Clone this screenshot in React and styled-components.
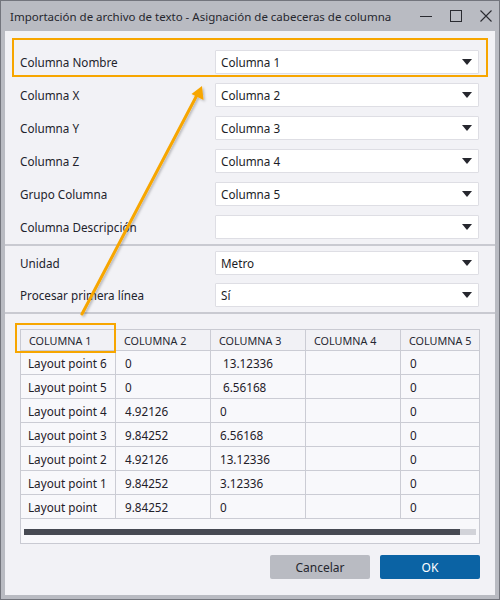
import React from "react";
import styled, { createGlobalStyle } from "styled-components";

const GlobalStyle = createGlobalStyle`
  html, body { margin: 0; padding: 0; background: #ffffff; }
  body { font-family: "Noto Sans", "Open Sans", sans-serif; }
  * { box-sizing: border-box; }
`;

const ORANGE = "#f7a600";

const Window = styled.div`
  position: relative;
  width: 500px;
  height: 600px;
  border: 1px solid #73757d;
  background: #b9bbc2;
  display: flex;
  flex-direction: column;
`;

const TitleBar = styled.div`
  height: 30px;
  display: flex;
  align-items: center;
  padding-left: 9px;
  flex-shrink: 0;
`;

const Title = styled.div`
  flex: 1;
  font-size: 11.5px;
  color: #26272e;
  white-space: nowrap;
`;

const WinButtons = styled.div`
  display: flex;
  align-items: center;
  gap: 18px;
  padding-right: 7px;
`;

const Body = styled.div`
  flex: 1;
  margin: 0 4px 4px 4px;
  background: #f2f2f6;
  display: flex;
  flex-direction: column;
`;

const Section = styled.div`
  display: flex;
  flex-direction: column;
  gap: ${(p) => p.$gap}px;
  padding: ${(p) => p.$pad};
`;

const Separator = styled.div`
  height: 2px;
  background: #c9cad1;
`;

const Row = styled.div`
  position: relative;
  display: grid;
  grid-template-columns: 195px 264px;
  align-items: center;
  height: 24px;
`;

const Label = styled.div`
  font-size: 11.7px;
  color: #22232c;
`;

const Dropdown = styled.div`
  height: 24px;
  background: #ffffff;
  border: 1px solid #dedee4;
  border-radius: 1px;
  display: flex;
  align-items: center;
  justify-content: space-between;
  padding: 0 6px 0 5px;
  font-size: 11.7px;
  color: #1c1d26;
`;

const Caret = styled.span`
  width: 0;
  height: 0;
  border-left: 5px solid transparent;
  border-right: 5px solid transparent;
  border-top: 6px solid #26272e;
`;

const Highlight = styled.div`
  position: absolute;
  border: 2px solid ${ORANGE};
  pointer-events: none;
  left: ${(p) => p.$l}px;
  top: ${(p) => p.$t}px;
  width: ${(p) => p.$w}px;
  height: ${(p) => p.$h}px;
`;

const TableBox = styled.div`
  position: relative;
  width: 460px;
  border: 1px solid #c9cad2;
  background: #f8f8fb;
`;

const GridClip = styled.div`
  overflow: hidden;
`;

const Grid = styled.div`
  display: grid;
  grid-template-columns: repeat(5, 95px);
  width: 475px;
`;

const HeadCell = styled.div`
  height: 21px;
  background: #f1f1f5;
  border-right: 1px solid #cbccd4;
  border-bottom: 1px solid #cbccd4;
  padding: 0 7px 0 8px;
  display: flex;
  align-items: center;
  font-size: 10.8px;
  color: #262731;
  white-space: nowrap;
`;

const Cell = styled.div`
  height: 24px;
  background: #f8f8fb;
  border-right: 1px solid #cbccd4;
  border-bottom: 1px solid #cbccd4;
  padding: 0 7px 0 ${(p) => (p.$first ? 7 : 9)}px;
  display: flex;
  align-items: center;
  font-size: 11.7px;
  color: #1f2029;
  white-space: pre;
`;

const ScrollArea = styled.div`
  height: 24px;
  padding: 10px 3px 0 3px;
`;

const Track = styled.div`
  height: 6px;
  background: #d2d3d9;
  display: flex;
`;

const Thumb = styled.div`
  height: 6px;
  background: #474a53;
`;

const ButtonBar = styled.div`
  display: flex;
  justify-content: flex-end;
  gap: 10px;
  width: 460px;
`;

const Button = styled.button`
  width: 100px;
  height: 24px;
  border: none;
  border-radius: 2px;
  font-family: "Noto Sans", "Open Sans", sans-serif;
  font-size: 12px;
  background: ${(p) => (p.$primary ? "#0b63a4" : "#b9bbc2")};
  color: ${(p) => (p.$primary ? "#ffffff" : "#25262e")};
  padding: 0;
`;

const Overlay = styled.svg`
  position: absolute;
  left: -1px;
  top: -1px;
  pointer-events: none;
`;

const rows = [
  ["Columna Nombre", "Columna 1"],
  ["Columna X", "Columna 2"],
  ["Columna Y", "Columna 3"],
  ["Columna Z", "Columna 4"],
  ["Grupo Columna", "Columna 5"],
  ["Columna Descripción", ""],
];

const data = [
  ["Layout point 6", "0", " 13.12336", "", "0"],
  ["Layout point 5", "0", " 6.56168", "", "0"],
  ["Layout point 4", "4.92126", "0", "", "0"],
  ["Layout point 3", "9.84252", "6.56168", "", "0"],
  ["Layout point 2", "4.92126", "13.12336", "", "0"],
  ["Layout point 1", "9.84252", "3.12336", "", "0"],
  ["Layout point", "9.84252", "0", "", "0"],
];

function Field({ label, value, highlight }) {
  return (
    <Row>
      <Label>{label}</Label>
      <Dropdown>
        <span>{value}</span>
        <Caret />
      </Dropdown>
      {highlight && <Highlight $l={-8} $t={-12} $w={476} $h={39} />}
    </Row>
  );
}

export default function App() {
  return (
    <>
      <GlobalStyle />
      <Window>
        <TitleBar>
          <Title>Importación de archivo de texto - Asignación de cabeceras de columna</Title>
          <WinButtons>
            <svg width="12" height="12" viewBox="0 0 12 12">
              <line x1="0" y1="6.5" x2="12" y2="6.5" stroke="#2a2b31" strokeWidth="1" />
            </svg>
            <svg width="12" height="12" viewBox="0 0 12 12">
              <rect x="0.5" y="0.5" width="11" height="11" fill="none" stroke="#2a2b31" strokeWidth="1" />
            </svg>
            <svg width="12" height="12" viewBox="0 0 12 12">
              <path d="M0.5 0.5 L11.5 11.5 M11.5 0.5 L0.5 11.5" stroke="#2a2b31" strokeWidth="1.1" />
            </svg>
          </WinButtons>
        </TitleBar>
        <Body>
          <Section $gap={9} $pad="19px 16px 5px 15px">
            {rows.map(([l, v], i) => (
              <Field key={l} label={l} value={v} highlight={i === 0} />
            ))}
          </Section>
          <Separator />
          <Section $gap={8} $pad="5px 16px 5px 15px">
            <Field label="Unidad" value="Metro" />
            <Field label="Procesar primera línea" value="Sí" />
          </Section>
          <Separator />
          <Section $gap={11} $pad="15px 15px 16px 15px">
            <TableBox>
              <GridClip>
                <Grid>
                  {["COLUMNA 1", "COLUMNA 2", "COLUMNA 3", "COLUMNA 4", "COLUMNA 5"].map((h) => (
                    <HeadCell key={h}>{h}</HeadCell>
                  ))}
                  {data.map((r, i) =>
                    r.map((c, j) => (
                      <Cell key={i + "-" + j} $first={j === 0}>
                        {c}
                      </Cell>
                    ))
                  )}
                </Grid>
              </GridClip>
              <ScrollArea>
                <Track>
                  <Thumb style={{ width: "436px" }} />
                </Track>
              </ScrollArea>
              <Highlight $l={-6} $t={-7} $w={101} $h={30} />
            </TableBox>
            <ButtonBar>
              <Button>Cancelar</Button>
              <Button $primary>OK</Button>
            </ButtonBar>
          </Section>
        </Body>
        <Overlay width="500" height="600" viewBox="0 0 500 600">
          <defs>
            <filter id="sh" x="-20%" y="-20%" width="140%" height="140%">
              <feDropShadow dx="1.5" dy="1.5" stdDeviation="1.2" floodColor="#000" floodOpacity="0.25" />
            </filter>
          </defs>
          <g filter="url(#sh)">
            <line x1="82" y1="314" x2="197" y2="95" stroke={ORANGE} strokeWidth="3" strokeLinecap="round" />
            <polygon points="202,86 203.5,100 191.5,94" fill={ORANGE} />
          </g>
        </Overlay>
      </Window>
    </>
  );
}
